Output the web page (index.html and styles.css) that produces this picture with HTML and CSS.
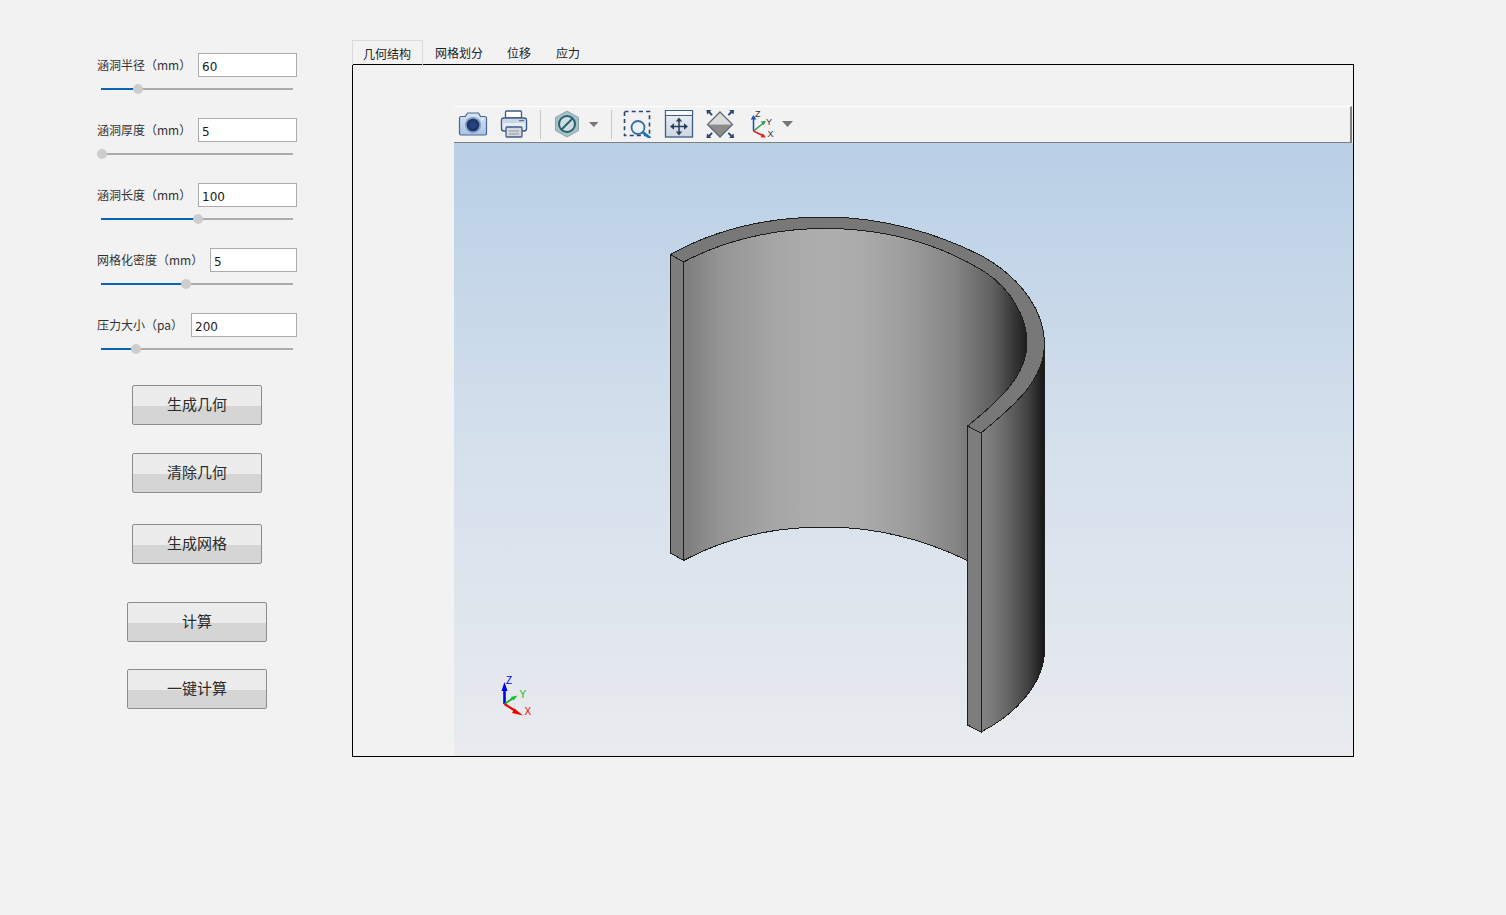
FILE: index.html
```html
<!DOCTYPE html>
<html lang="zh">
<head>
<meta charset="utf-8">
<title>涵洞计算</title>
<link rel="stylesheet" href="styles.css">
</head>
<body>
<div class="app">
  <aside class="sidebar">
    <div class="param">
      <div class="param-row"><label class="param-label">涵洞半径（mm）</label><input class="param-input w-99" value="60"></div>
      <div class="slider"><div class="slider-fill" style="width:19.3%"><span class="slider-handle"></span></div></div>
    </div>
    <div class="param">
      <div class="param-row"><label class="param-label">涵洞厚度（mm）</label><input class="param-input w-99" value="5"></div>
      <div class="slider"><div class="slider-fill" style="width:0.5%"><span class="slider-handle"></span></div></div>
    </div>
    <div class="param">
      <div class="param-row"><label class="param-label">涵洞长度（mm）</label><input class="param-input w-99" value="100"></div>
      <div class="slider"><div class="slider-fill" style="width:50.5%"><span class="slider-handle"></span></div></div>
    </div>
    <div class="param">
      <div class="param-row"><label class="param-label">网格化密度（mm）</label><input class="param-input w-87" value="5"></div>
      <div class="slider"><div class="slider-fill" style="width:44.3%"><span class="slider-handle"></span></div></div>
    </div>
    <div class="param">
      <div class="param-row"><label class="param-label">压力大小（pa）</label><input class="param-input w-106" value="200"></div>
      <div class="slider"><div class="slider-fill" style="width:18.2%"><span class="slider-handle"></span></div></div>
    </div>
    <div class="actions">
      <button class="btn btn-narrow btn-first">生成几何</button>
      <button class="btn btn-narrow btn-second">清除几何</button>
      <button class="btn btn-narrow btn-third">生成网格</button>
      <button class="btn btn-wide btn-fourth">计算</button>
      <button class="btn btn-wide btn-fifth">一键计算</button>
    </div>
  </aside>

  <main class="workspace">
    <nav class="tabs">
      <div class="tab tab-active">几何结构</div>
      <div class="tab">网格划分</div>
      <div class="tab">位移</div>
      <div class="tab tab-last">应力</div>
    </nav>
    <section class="frame">
      <div class="viewer">
        <div class="toolbar">
          <svg class="icon i-camera" viewBox="458 110 30 28" width="30" height="28">
            <defs>
              <linearGradient id="camBody" x1="0" y1="0" x2="0" y2="1"><stop offset="0" stop-color="#d8e5f4"/><stop offset="1" stop-color="#a9c4e4"/></linearGradient>
            </defs>
            <path d="M461 116.500h4.500l2-3.500h11l2 3.500h4.500a1.500 1.500 0 0 1 1.500 1.500v15.500a1.500 1.500 0 0 1-1.500 1.500h-24a1.500 1.500 0 0 1-1.500-1.500v-15.500a1.500 1.500 0 0 1 1.500-1.500z" fill="url(#camBody)" stroke="#4a6690" stroke-width="1.200"/>
            <circle cx="473" cy="125" r="8" fill="#7f9ac2"/>
            <circle cx="473" cy="125" r="6.300" fill="#1d3567"/>
            <circle cx="473" cy="125" r="3.800" fill="#27437c"/>
            <circle cx="482.500" cy="119.500" r="1" fill="#fff"/>
          </svg>
          <svg class="icon i-print" viewBox="499 110 30 28" width="30" height="28">
            <path d="M505.500 118v-6a1 1 0 0 1 1-1h14a1 1 0 0 1 1 1v6z" fill="#fff" stroke="#3f5a85" stroke-width="1.300"/>
            <rect x="501.500" y="118" width="25" height="13" rx="2.500" fill="#e6edf5" stroke="#3f5a85" stroke-width="1.400"/>
            <rect x="502.500" y="119" width="23" height="4" fill="#c7d6e8"/>
            <path d="M519 120.500h5" stroke="#5f6f85" stroke-width="1.200"/>
            <rect x="506" y="127" width="16" height="10" rx="1" fill="#d5d9de" stroke="#3f5a85" stroke-width="1.300"/>
            <path d="M509 131h10M509 134h10" stroke="#8d97a5" stroke-width="1"/>
          </svg>
          <span class="tool-sep sep-a"></span>
          <svg class="icon i-hex" viewBox="553 110 28 28" width="28" height="28">
            <path d="M567 111l11.500 6.500v13L567 137l-11.500-6.500v-13z" fill="#a9c1c6" stroke="#8aa7ad" stroke-width="1"/>
            <circle cx="567" cy="124" r="8" fill="#cfdde0" stroke="#27606f" stroke-width="2"/>
            <path d="M561.500 129.500l11-11" stroke="#27606f" stroke-width="2"/>
          </svg>
          <svg class="icon i-drop-a" viewBox="588 120 11 8" width="11" height="8"><path d="M589 122h9.500l-4.750 5z" fill="#777"/></svg>
          <span class="tool-sep sep-b"></span>
          <svg class="icon i-zoom" viewBox="622 109 30 28" width="30" height="28">
            <rect x="624.500" y="110.500" width="25" height="24" fill="none" stroke="#2a4573" stroke-width="1.600" stroke-dasharray="4 3.200"/>
            <circle cx="638" cy="126.500" r="6.500" fill="#eaf1f8" stroke="#3a6ea5" stroke-width="1.800"/>
            <path d="M643 131.500l6.500 5" stroke="#1b74b8" stroke-width="2.800" stroke-linecap="round"/>
          </svg>
          <svg class="icon i-pan" viewBox="664 110 30 28" width="30" height="28">
            <defs><linearGradient id="panBg" x1="0" y1="0" x2="0" y2="1"><stop offset="0" stop-color="#eef2f6"/><stop offset="1" stop-color="#ccd6e2"/></linearGradient></defs>
            <rect x="665.500" y="110.500" width="27" height="26.500" fill="url(#panBg)" stroke="#3f5a85" stroke-width="1.300"/>
            <rect x="666" y="111" width="26" height="4" fill="#f6f8fa"/>
            <path d="M666 115.500h26" stroke="#3f5a85" stroke-width="1"/>
            <path d="M679 120v13M672.500 126.500h13" stroke="#2a3e5c" stroke-width="1.500"/>
            <path d="M679 117.500l3.200 4h-6.400zM679 135.500l3.200-4h-6.400zM670 126.500l4-3.200v6.400zM688 126.500l-4-3.200v6.400z" fill="#2a3e5c"/>
          </svg>
          <svg class="icon i-fit" viewBox="704 110 32 28" width="32" height="28">
            <path d="M720 112l12.500 12.500h-25z" fill="#dcdcdc"/>
            <path d="M707.500 124.500h25L720 137z" fill="#8c8c8c"/>
            <path d="M720 112l12.500 12.500L720 137l-12.500-12.500z" fill="none" stroke="#5e6a7a" stroke-width="1.300"/>
            <path d="M706.500 110h5l-1.600 1.600 2.900 2.900-1.300 1.300-2.900-2.900-1.600 1.600zM734 110h-5l1.600 1.600-2.900 2.900 1.300 1.300 2.900-2.900 1.600 1.600zM706.500 138h5l-1.600-1.600 2.900-2.900-1.300-1.300-2.900 2.900-1.600-1.600zM734 138h-5l1.600-1.600-2.900-2.900 1.300-1.300 2.900 2.900 1.600-1.600z" fill="#2a4573"/>
          </svg>
          <svg class="icon i-axes" viewBox="744 110 32 28" width="32" height="28">
            <path d="M753.500 131v-14" stroke="#1f4fa8" stroke-width="1.500"/>
            <path d="M753.500 115l-2.800 4.500h5.600z" fill="#1f4fa8"/>
            <path d="M753.500 131l10-8" stroke="#2a9a4a" stroke-width="1.500"/>
            <path d="M766 121l-5.300 0.400 3 3.600z" fill="#2a9a4a"/>
            <path d="M753.500 131l10 5" stroke="#e02020" stroke-width="1.500"/>
            <path d="M766 137.500l-3.300-4.300-2.100 4.100z" fill="#e02020"/>
            <text class="axis-label" x="755" y="117">Z</text>
            <text class="axis-label" x="766" y="125">Y</text>
            <text class="axis-label" x="767.500" y="137">X</text>
          </svg>
          <svg class="icon i-drop-b" viewBox="782 120 11 8" width="11" height="8"><path d="M782 121h11l-5.500 6z" fill="#777"/></svg>
        </div>
        <svg class="scene" viewBox="454 143 899 613" width="899" height="613">
          <defs>
            <linearGradient id="innerFace" gradientUnits="userSpaceOnUse" x1="683" y1="0" x2="1028" y2="0">
              <stop offset="0" stop-color="#7c7c7c"/>
              <stop offset="0.11" stop-color="#959595"/>
              <stop offset="0.25" stop-color="#a4a4a4"/>
              <stop offset="0.36" stop-color="#acacac"/>
              <stop offset="0.44" stop-color="#aeaeae"/>
              <stop offset="0.52" stop-color="#aaaaaa"/>
              <stop offset="0.64" stop-color="#9e9e9e"/>
              <stop offset="0.79" stop-color="#858585"/>
              <stop offset="0.90" stop-color="#5f5f5f"/>
              <stop offset="0.97" stop-color="#2f2f2f"/>
              <stop offset="1" stop-color="#1c1c1c"/>
            </linearGradient>
            <linearGradient id="outerFace" gradientUnits="userSpaceOnUse" x1="981" y1="0" x2="1045" y2="0">
              <stop offset="0" stop-color="#848484"/>
              <stop offset="0.25" stop-color="#747474"/>
              <stop offset="0.5" stop-color="#5c5c5c"/>
              <stop offset="0.75" stop-color="#404040"/>
              <stop offset="0.95" stop-color="#1c1c1c"/>
              <stop offset="1" stop-color="#181818"/>
            </linearGradient>
          </defs>
          <g class="solid">
            <path class="face" fill="url(#innerFace)" d="M683.500 262C725 240 775 228.500 825 228.500C880 228.500 935 241 985 272C1012 290 1027 318 1027 343C1027 375 1000 400 967.500 426V560.500C925 540 880 527 825 527C775 527 725 538 683.500 560.500Z"/>
            <path class="face" fill="url(#outerFace)" d="M981 433C1015 405 1044.500 380 1044.500 343V650C1044.500 680 1020 712 981 732Z"/>
            <path class="edge" fill="#787878" d="M670.500 254.500C716 229 770 217 825 217C880 217 935 232 982 256C1025 280 1044.500 315 1044.500 343C1044.500 380 1015 405 981 433L967.500 426C1000 400 1027 375 1027 343C1027 318 1012 290 985 272C935 241 880 228.500 825 228.500C775 228.500 725 240 683.500 262Z"/>
            <path class="edge" fill="#7d7d7d" d="M670.500 254.500L683.500 262V560.500L670.500 553Z"/>
            <path class="edge" fill="#7d7d7d" d="M967.500 426L981 433V732L967.500 725Z"/>
            <path class="edge" fill="none" d="M683.500 560.500C725 538 775 527 825 527C880 527 925 540 967.500 560.500M1044.500 343V650C1044.500 680 1020 712 981 732"/>
          </g>
          <path d="M504.500 704V688" stroke="#0000f0" stroke-width="2.600"/>
          <path d="M504.500 682l-3 9h6z" fill="#0000f0"/>
          <path d="M504.500 704l8-5.500" stroke="#10b020" stroke-width="1.800"/>
          <path d="M517.500 695.500l-6.500 1.500 2.500 3.500z" fill="#10c020"/>
          <path d="M504.500 704l11 7" stroke="#f00000" stroke-width="2.200"/>
          <path d="M523 715.500l-8.500-7-2.500 4.500z" fill="#f00000"/>
          <text class="triad-label triad-z" x="506" y="684">Z</text>
          <text class="triad-label triad-y" x="519.500" y="698">Y</text>
          <text class="triad-label triad-x" x="524.500" y="715">X</text>
        </svg>
      </div>
    </section>
  </main>
</div>
</body>
</html>
```
FILE: styles.css
```css
* { box-sizing: border-box; }

html, body {
  margin: 0;
  height: 100%;
}

body {
  background: #f2f2f2;
  font-family: "Noto Sans CJK SC", "DejaVu Sans", sans-serif;
  color: #222;
  overflow: hidden;
}

.app {
  display: flex;
  height: 915px;
}

/* left column */
.sidebar {
  width: 352px;
  flex: none;
  padding: 53px 55px 0 97px;
}

.param { margin-bottom: 28px; }

.param-row {
  display: flex;
  justify-content: space-between;
  align-items: center;
  height: 24px;
}

.param-label {
  font-size: 12px;
  line-height: 24px;
  white-space: nowrap;
  color: #333;
}

.param-input {
  height: 24px;
  border: 1px solid #ababab;
  background: #fff;
  padding: 3px 0 0 3px;
  margin: 0;
  font-family: "DejaVu Sans", sans-serif;
  font-size: 12px;
  color: #1a1a1a;
  outline: none;
  border-radius: 0;
}

.w-99 { width: 99px; }
.w-87 { width: 87px; }
.w-106 { width: 106px; }

.slider {
  position: relative;
  height: 2px;
  width: 192px;
  margin: 11px 0 0 4px;
  background: #ababab;
}

.slider-fill {
  position: relative;
  height: 100%;
  background: #0a64b4;
}

.slider-handle {
  position: absolute;
  right: -5px;
  top: -4px;
  width: 10px;
  height: 10px;
  border-radius: 50%;
  background: #cdcdcd;
}

.actions {
  display: flex;
  flex-direction: column;
  align-items: center;
  padding-top: 7px;
}

.btn {
  display: block;
  height: 40px;
  padding: 0 0 2px;
  border: 1px solid #8c8c8c;
  border-radius: 2px;
  background: linear-gradient(to bottom, #ececec 0, #ececec 52%, #d5d5d5 52%, #d5d5d5 100%);
  font-family: "Noto Sans CJK SC", sans-serif;
  font-size: 15px;
  line-height: 36px;
  color: #2a2a2a;
}

.btn-narrow { width: 130px; }
.btn-wide { width: 140px; }
.btn-second { margin-top: 28px; }
.btn-third { margin-top: 31px; }
.btn-fourth { margin-top: 38px; }
.btn-fifth { margin-top: 27px; }

/* right column */
.workspace {
  width: 1002px;
  flex: none;
  padding-top: 40px;
}

.tabs {
  display: flex;
  height: 24px;
}

.tab {
  padding: 0 12px;
  height: 25px;
  font-size: 12px;
  line-height: 26px;
  color: #222;
  white-space: nowrap;
}

.tab-active {
  padding: 0 10px;
  border: 1px solid #d9d9d9;
  border-bottom: 0;
  width: 71px;
}

.tab-last { margin-left: 1px; }

.frame {
  height: 693px;
  border: 1px solid #000;
  padding: 41px 0 0 101px;
  background: #f2f2f2;
}

.viewer {
  display: flex;
  flex-direction: column;
  height: 650px;
}

.toolbar {
  display: flex;
  align-items: flex-start;
  flex: none;
  height: 37px;
  padding: 3px 0 0 4px;
  border-top: 1px solid #fff;
  border-bottom: 1px solid #808080;
  border-right: 2px solid #808080;
  margin-right: 1px;
  background: #f2f2f2;
}

.icon { display: block; flex: none; }

.i-print { margin-left: 11px; }
.tool-sep {
  display: block;
  flex: none;
  width: 1px;
  height: 29px;
  background: #c8c8c8;
}
.sep-a { margin-left: 11px; }
.i-hex { margin-left: 12px; }
.i-drop-a { margin: 10px 0 0 7px; }
.sep-b { margin-left: 12px; }
.i-zoom { margin-left: 10px; }
.i-pan { margin-left: 12px; }
.i-fit { margin-left: 10px; }
.i-axes { margin-left: 8px; }
.i-drop-b { margin: 10px 0 0 6px; }

.axis-label {
  font-family: "Liberation Sans", sans-serif;
  font-size: 9px;
  fill: #333;
}

.scene {
  display: block;
  flex: none;
  background: linear-gradient(to bottom, #b9cfe6 0%, #d5e0ec 50%, #e9ebef 100%);
}

.solid { shape-rendering: crispEdges; }

.solid .edge {
  stroke: #1e1e1e;
  stroke-width: 1;
}

.triad-label {
  font-family: "Liberation Sans", sans-serif;
  font-size: 10px;
}

.triad-z { fill: #0000f0; }
.triad-y { fill: #10c020; }
.triad-x { fill: #f00000; }
```
